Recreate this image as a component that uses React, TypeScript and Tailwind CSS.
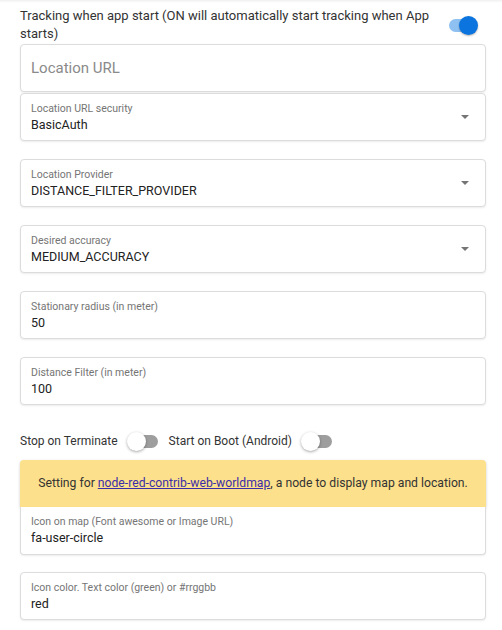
import React from "react";

function Toggle({ on }: { on?: boolean }) {
  return (
    <div className="relative w-[32px] h-[20px] flex items-center shrink-0">
      <div
        className={
          on
            ? "absolute left-[3px] right-[1px] h-[13px] rounded-full bg-[#8ec1f2]"
            : "absolute left-[3px] right-[1px] h-[13px] rounded-full bg-[#9e9e9e]"
        }
      />
      <div
        className={
          on
            ? "absolute right-0 w-[19px] h-[19px] rounded-full bg-[#0b74de] shadow-[0_1px_2px_rgba(0,0,0,0.3)]"
            : "absolute left-0 w-[19px] h-[19px] rounded-full bg-white shadow-[0_1px_3px_rgba(0,0,0,0.35)]"
        }
      />
    </div>
  );
}

function Field({
  label,
  value,
  select,
  className = "",
}: {
  label: string;
  value: string;
  select?: boolean;
  className?: string;
}) {
  return (
    <div
      className={
        "relative h-[48px] rounded-[4px] border border-[#dcdcdc] bg-white shadow-[0_1px_2px_rgba(0,0,0,0.08)] pl-[10px] pr-[36px] pt-[8px] " +
        className
      }
    >
      <div className="text-[10.5px] leading-[13px] text-[#757575]">{label}</div>
      <div className="text-[12.5px] leading-[18px] mt-[1px] text-[#222]">{value}</div>
      {select && (
        <div className="absolute right-[16px] top-[21px] w-0 h-0 border-l-[4px] border-r-[4px] border-t-[4px] border-l-transparent border-r-transparent border-t-[#757575]" />
      )}
    </div>
  );
}

export default function App() {
  return (
    <div className="w-[502px] h-[630px] bg-white overflow-hidden font-['Roboto',sans-serif] relative">
      <div className="absolute top-0 left-0 right-0 h-[3px] bg-gradient-to-b from-[rgba(0,0,0,0.06)] to-transparent" />
      <div className="pl-[20px] pr-[16px] pt-[7px] flex flex-col">
        <div className="flex items-start justify-between">
          <div className="text-[13px] leading-[18px] text-[#333] w-[410px]">
            Tracking when app start (ON will automatically start tracking when App starts)
          </div>
          <div className="mt-[8px] mr-[8px]">
            <Toggle on />
          </div>
        </div>

        <div className="mt-[1px] h-[48px] rounded-[4px] border border-[#dcdcdc] bg-white shadow-[0_1px_2px_rgba(0,0,0,0.08)] pl-[10px] flex items-center">
          <span className="text-[15px] text-[#8a8a8a]">Location URL</span>
        </div>

        <Field className="mt-[1px]" label="Location URL security" value="BasicAuth" select />
        <Field className="mt-[18px]" label="Location Provider" value="DISTANCE_FILTER_PROVIDER" select />
        <Field className="mt-[18px]" label="Desired accuracy" value="MEDIUM_ACCURACY" select />
        <Field className="mt-[18px]" label="Stationary radius (in meter)" value="50" />
        <Field className="mt-[18px]" label="Distance Filter (in meter)" value="100" />

        <div className="mt-[26px] flex items-center h-[20px] text-[12px] text-[#333]">
          <span>Stop on Terminate</span>
          <div className="ml-[9px]">
            <Toggle />
          </div>
          <span className="ml-[10px]">Start on Boot (Android)</span>
          <div className="ml-[9px]">
            <Toggle />
          </div>
        </div>

        <div className="mt-[9px] h-[47px] rounded-t-[4px] bg-[#fde08b] shadow-[0_1px_3px_rgba(0,0,0,0.2)] flex items-center justify-center text-[12.2px] text-[#333]">
          <span>
            Setting for{" "}
            <a href="#" className="underline text-[#3b2ea8]">
              node-red-contrib-web-worldmap
            </a>
            , a node to display map and location.
          </span>
        </div>

        <Field className="rounded-t-none border-t-0" label="Icon on map (Font awesome or Image URL)" value="fa-user-circle" />
        <Field className="mt-[17px]" label="Icon color. Text color (green) or #rrggbb" value="red" />
      </div>
    </div>
  );
}
